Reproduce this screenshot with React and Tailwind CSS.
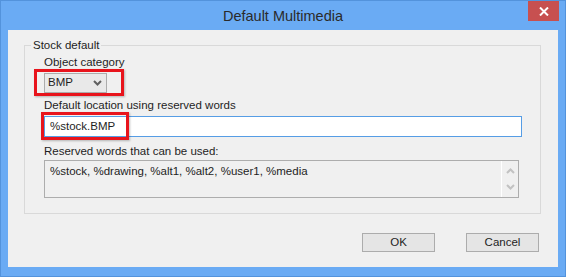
import React from "react";

function Chevron({ up = false, className = "" }) {
    return (
        <svg width="9" height="6" viewBox="0 0 9 6" className={className}>
            <path
                d={up ? "M1 5 L4.5 1.5 L8 5" : "M1 1 L4.5 4.5 L8 1"}
                fill="none"
                stroke="currentColor"
                strokeWidth="2"
            />
        </svg>
    );
}

export default function App() {
    return (
        <div
            className="relative w-[566px] h-[277px] bg-[#6aabf4] border border-[#5393dc] text-[11.5px] text-[#1e1e1e] overflow-hidden"
            style={{ fontFamily: '"Liberation Sans", Arial, sans-serif' }}
        >
            {/* Title bar */}
            <div className="h-[29px] flex items-center justify-center">
                <span className="text-[14.5px] text-[#2a2a2a] mt-[3px]">Default Multimedia</span>
            </div>
            <button className="absolute top-0 right-[6px] w-[31px] h-[20px] bg-[#c75050] flex items-center justify-center">
                <svg width="10" height="9" viewBox="0 0 10 9">
                    <path d="M1 0.5 L9 8.5 M9 0.5 L1 8.5" stroke="white" strokeWidth="2" />
                </svg>
            </button>

            {/* Client area */}
            <div className="mx-[7px] h-[237px] bg-[#f0f0f0] pt-[15px] px-[16px]">
                {/* Group box */}
                <div className="relative w-[517px] h-[169px] border border-[#d9d9d9] pl-[19px] pt-[10px]">
                    <span className="absolute -top-[8px] left-[6px] px-[2px] bg-[#f0f0f0] leading-[14px]">
                        Stock default
                    </span>

                    <div className="leading-[13px]">Object category</div>
                    <div className="mt-[4px] w-[63px] h-[20px] border border-[#acacac] bg-[#e9e9e9] flex items-center justify-between pl-[3px] pr-[4px]">
                        <span>BMP</span>
                        <Chevron className="text-[#606060]" />
                    </div>

                    <div className="mt-[6px] leading-[13px]">Default location using reserved words</div>
                    <div className="mt-[4px] w-[478px] h-[21px] border border-[#569de5] bg-white flex items-center pl-[5px]">
                        %stock.BMP
                    </div>

                    <div className="mt-[8px] leading-[13px]">Reserved words that can be used:</div>
                    <div className="mt-[2px] w-[475px] h-[38px] border border-[#adadad] flex">
                        <div className="flex-1 pl-[5px] pt-[3px] leading-[14px]">
                            %stock, %drawing, %alt1, %alt2, %user1, %media
                        </div>
                        <div className="w-[17px] border-l border-white flex flex-col items-center justify-between py-[7px] text-[#c2c2c2]">
                            <Chevron up />
                            <Chevron />
                        </div>
                    </div>
                </div>

                {/* Buttons */}
                <div className="flex justify-end gap-[31px] mt-[19px] pr-[3px]">
                    <button className="w-[73px] h-[19px] border border-[#acacac] bg-[#e5e5e5] text-[11.5px] leading-none">
                        OK
                    </button>
                    <button className="w-[73px] h-[19px] border border-[#acacac] bg-[#e5e5e5] text-[11.5px] leading-none">
                        Cancel
                    </button>
                </div>
            </div>

            {/* Red annotation boxes */}
            <div className="absolute left-[33px] top-[68px] w-[90px] h-[27px] border-[3px] border-[#e8141c] shadow-[1px_1px_2px_rgba(0,0,0,0.25)]" />
            <div className="absolute left-[40px] top-[111px] w-[88px] h-[28px] border-[3px] border-[#e8141c] shadow-[1px_1px_2px_rgba(0,0,0,0.25)]" />
        </div>
    );
}
